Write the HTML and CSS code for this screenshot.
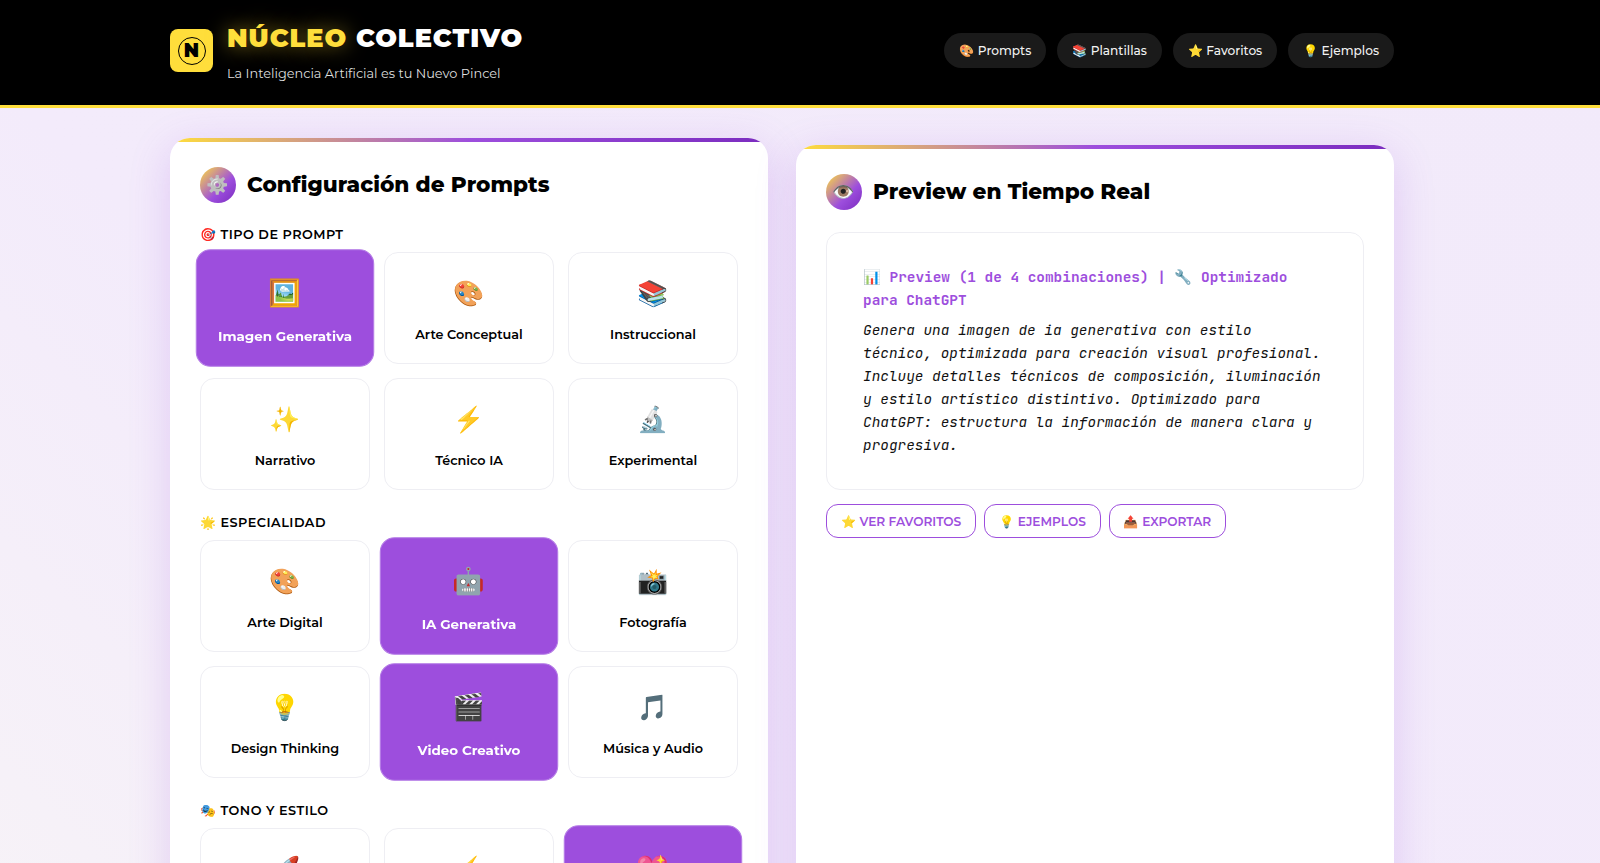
FILE: index.html
```html
<!DOCTYPE html>
<html lang="es">
<head>
<meta charset="utf-8">
<title>Núcleo Colectivo</title>
<link rel="stylesheet" href="styles.css">
</head>
<body>
<header class="site-header">
  <div class="header-inner">
    <div class="brand">
      <div class="logo"><span class="logo-ring">N</span></div>
      <div class="brand-text">
        <h1 class="brand-title"><span class="accent">NÚCLEO</span> COLECTIVO</h1>
        <p class="brand-sub">La Inteligencia Artificial es tu Nuevo Pincel</p>
      </div>
    </div>
    <nav class="nav">
      <a class="pill">🎨 Prompts</a>
      <a class="pill">📚 Plantillas</a>
      <a class="pill">⭐ Favoritos</a>
      <a class="pill">💡 Ejemplos</a>
    </nav>
  </div>
</header>
<main class="layout">
  <section class="card">
    <h2 class="card-title"><span class="title-icon"><span class="gear">⚙️</span></span>Configuración de Prompts</h2>
    <div class="group">
      <h3 class="group-label">🎯 Tipo de Prompt</h3>
      <div class="options">
        <button class="option selected"><span class="option-icon">🖼️</span><span>Imagen Generativa</span></button>
        <button class="option"><span class="option-icon">🎨</span><span>Arte Conceptual</span></button>
        <button class="option"><span class="option-icon">📚</span><span>Instruccional</span></button>
        <button class="option"><span class="option-icon">✨</span><span>Narrativo</span></button>
        <button class="option"><span class="option-icon">⚡</span><span>Técnico IA</span></button>
        <button class="option"><span class="option-icon">🔬</span><span>Experimental</span></button>
      </div>
    </div>
    <div class="group">
      <h3 class="group-label">🌟 Especialidad</h3>
      <div class="options">
        <button class="option"><span class="option-icon">🎨</span><span>Arte Digital</span></button>
        <button class="option selected"><span class="option-icon">🤖</span><span>IA Generativa</span></button>
        <button class="option"><span class="option-icon">📸</span><span>Fotografía</span></button>
        <button class="option"><span class="option-icon">💡</span><span>Design Thinking</span></button>
        <button class="option selected"><span class="option-icon">🎬</span><span>Video Creativo</span></button>
        <button class="option"><span class="option-icon">🎵</span><span>Música y Audio</span></button>
      </div>
    </div>
    <div class="group">
      <h3 class="group-label">🎭 Tono y Estilo</h3>
      <div class="options">
        <button class="option"><span class="option-icon">🚀</span><span>Inspirador</span></button>
        <button class="option"><span class="option-icon">⚡</span><span>Dinámico</span></button>
        <button class="option selected"><span class="option-icon">💖</span><span>Emotivo</span></button>
      </div>
    </div>
  </section>
  <section class="card card-preview">
    <h2 class="card-title"><span class="title-icon">👁️</span>Preview en Tiempo Real</h2>
    <div class="preview-box">
      <p class="preview-head">📊 Preview (1 de 4 combinaciones) | 🔧 Optimizado para ChatGPT</p>
      <p class="preview-body">Genera una imagen de ia generativa con estilo técnico, optimizada para creación visual profesional. Incluye detalles técnicos de composición, iluminación y estilo artístico distintivo. Optimizado para ChatGPT: estructura la información de manera clara y progresiva.</p>
    </div>
    <div class="actions">
      <button class="action">⭐ Ver Favoritos</button>
      <button class="action">💡 Ejemplos</button>
      <button class="action">📤 Exportar</button>
    </div>
  </section>
</main>
</body>
</html>
```
FILE: styles.css
```css
* { box-sizing: border-box; }
html, body { margin: 0; padding: 0; }
body {
  font-family: "Montserrat", "Inter", "Noto Color Emoji", sans-serif;
  background: linear-gradient(45deg, #f7f3f7 0%, #f3ebfb 35%, #f2eafa 100%);
  color: #000;
  min-height: 100vh;
}
.site-header {
  background: #000;
  border-bottom: 3px solid #ffde3b;
  height: 108px;
  padding-bottom: 4px;
}
.header-inner {
  width: 1224px;
  margin-left: 170px;
  height: 100%;
  display: flex;
  align-items: center;
  justify-content: space-between;
}
.brand { display: flex; align-items: center; gap: 14px; }
.brand-text { padding-top: 2px; }
.logo {
  width: 43px;
  height: 43px;
  background: #ffde3b;
  border-radius: 8px;
  display: flex;
  align-items: center;
  justify-content: center;
}
.logo-ring {
  width: 28px;
  height: 28px;
  border: 1.5px solid #000;
  border-radius: 50%;
  display: flex;
  align-items: center;
  justify-content: center;
  font-size: 19px;
  font-weight: 900;
  color: #000;
}
.brand-title {
  margin: 0;
  font-size: 25.6px;
  font-weight: 900;
  line-height: 34px;
  color: #fff;
  letter-spacing: 1px;
}
.accent { color: #ffde3b; text-shadow: 0 0 20px rgba(255, 222, 59, 0.5); }
.brand-sub {
  margin: 10px 0 0;
  font-size: 12.9px;
  line-height: 17px;
  color: #dedede;
}
.nav { display: flex; gap: 11px; }
.pill {
  height: 35px;
  padding: 0 15px;
  display: flex;
  align-items: center;
  border-radius: 18px;
  background: #1a1a1a;
  color: #f2f2f2;
  font-size: 12.16px;
  font-weight: 500;
}
.layout {
  width: 1224px;
  margin-left: 170px;
  padding-top: 30px;
  display: grid;
  grid-template-columns: 1fr 1fr;
  gap: 28px;
  align-items: stretch;
}
.card {
  position: relative;
  overflow: hidden;
  background: #fff;
  border-radius: 20px;
  padding: 29px 30px 30px;
  box-shadow: 0 10px 40px rgba(157, 78, 221, 0.22);
}
.card::before {
  content: "";
  position: absolute;
  left: 0;
  right: 0;
  top: 0;
  height: 4px;
  background: linear-gradient(90deg, #ffde3b, #9d4edd, #7b2cbf);
}
.card-preview { margin-top: 7px; }
.card-title {
  margin: 0 0 23px;
  display: flex;
  align-items: flex-start;
  gap: 11px;
  font-size: 21.6px;
  font-weight: 800;
  line-height: 34px;
}
.card-preview .card-title { margin-bottom: 22px; }
.title-icon {
  width: 36px;
  height: 36px;
  flex: none;
  border-radius: 50%;
  background: linear-gradient(135deg, #ffde3b, #9d4edd 60%, #7b2cbf);
  display: flex;
  align-items: center;
  justify-content: center;
  font-size: 18px;
  font-weight: 400;
}
.gear { filter: grayscale(1) brightness(1.15); }
.group { margin-bottom: 23.6px; }
.group-label {
  margin: 0 0 8px;
  font-size: 12.8px;
  font-weight: 600;
  line-height: 18px;
  letter-spacing: 0.5px;
  text-transform: uppercase;
}
.options {
  display: grid;
  grid-template-columns: repeat(3, 1fr);
  gap: 14.4px 14px;
}
.option {
  height: 112px;
  padding: 22px 8px 0;
  display: flex;
  flex-direction: column;
  align-items: center;
  gap: 15px;
  background: #fff;
  border: 1px solid #eeeef3;
  border-radius: 14px;
  font-family: inherit;
  font-size: 12.8px;
  font-weight: 600;
  line-height: 17px;
  color: #000;
}
.option-icon { font-size: 25px; line-height: 36px; font-weight: 400; }
.option.selected {
  background: #9d4edd;
  border-color: #b57ce6;
  color: #fff;
  font-weight: 700;
  transform: scale(1.05);
}
.preview-box {
  height: 257.5px;
  padding: 32px 36px;
  border: 1px solid #eeeef3;
  border-radius: 14px;
  background: #fff;
  font-family: "JetBrains Mono", "DejaVu Sans Mono", "Noto Color Emoji", monospace;
  font-size: 14.4px;
  line-height: 23px;
}
.preview-head { margin: 0 0 7px; color: #9d4edd; font-weight: 600; }
.preview-body { margin: 0; font-style: italic; color: #111; }
.actions { display: flex; gap: 8px; margin-top: 14.5px; }
.action {
  height: 34px;
  padding: 0 14px;
  background: #fff;
  border: 1.5px solid #9d4edd;
  border-radius: 12px;
  font-family: inherit;
  font-size: 12.16px;
  font-weight: 600;
  color: #9d4edd;
  text-transform: uppercase;
}
```
